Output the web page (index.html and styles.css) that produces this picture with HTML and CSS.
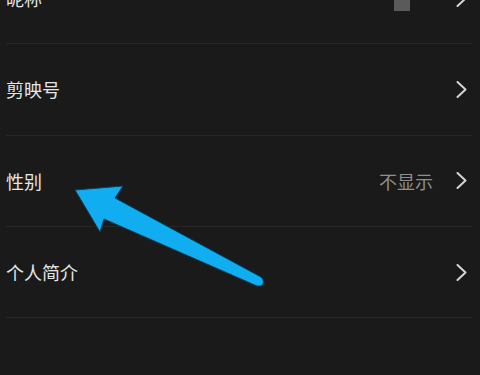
FILE: index.html
```html
<!DOCTYPE html>
<html lang="zh-CN">
<head>
  <meta charset="UTF-8">
  <meta name="viewport" content="width=device-width, initial-scale=1.0">
  <title>编辑资料</title>
  <link rel="stylesheet" href="styles.css">
</head>
<body>
  <main class="list">
    <div class="row">
      <span class="label">昵称</span>
      <span class="value"><span class="avatar"></span></span>
      <svg class="chev" width="11" height="17" viewBox="0 0 11 17"><polyline points="1.5,1 9.5,8.5 1.5,16" /></svg>
    </div>
    <div class="row">
      <span class="label">剪映号</span>
      <span class="value"></span>
      <svg class="chev" width="11" height="17" viewBox="0 0 11 17"><polyline points="1.5,1 9.5,8.5 1.5,16" /></svg>
    </div>
    <div class="row">
      <span class="label">性别</span>
      <span class="value">不显示</span>
      <svg class="chev" width="11" height="17" viewBox="0 0 11 17"><polyline points="1.5,1 9.5,8.5 1.5,16" /></svg>
    </div>
    <div class="row">
      <span class="label">个人简介</span>
      <span class="value"></span>
      <svg class="chev" width="11" height="17" viewBox="0 0 11 17"><polyline points="1.5,1 9.5,8.5 1.5,16" /></svg>
    </div>
  </main>

  <svg class="pointer" width="480" height="375" viewBox="0 0 480 375">
    <path d="M75 190 L123 186 L115 198 L261 277 Q266 282 261 286 L257 286 L104 219 L100 232 Z"
          fill="#10aef0" stroke="#0b3d55" stroke-width="1" stroke-linejoin="round"/>
  </svg>
</body>
</html>
```

FILE: styles.css
```css
body { margin: 0; background: #1a1a1a; font-family: "Noto Sans CJK SC", "Noto Sans", sans-serif; width: 480px; height: 375px; overflow: hidden; position: relative; }
.list { margin-top: -47px; }
.row { display: flex; align-items: center; height: 90.3px; margin: 0 8px 0 6px; border-bottom: 1px solid #262626; }
.label { flex: 1; color: #e6e6e6; font-size: 18px; }
.value { color: #8f8f8f; font-size: 18px; margin-right: 23px; }
.avatar { display: block; width: 16px; height: 16px; background: #5a5a5a; margin: 9px 23px 0 0; }
.chev { margin-right: 5px; fill: none; stroke: #d4d4d4; stroke-width: 2; stroke-linecap: round; stroke-linejoin: round; }
.pointer { position: absolute; top: 0; left: 0; }
```
